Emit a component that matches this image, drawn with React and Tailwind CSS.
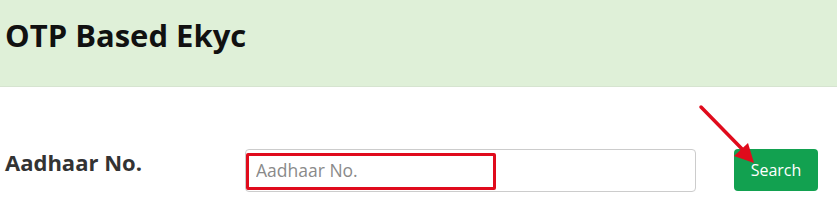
export default function App() {
  return (
    <div className="relative h-[202px] w-[837px] overflow-hidden bg-white font-['Open_Sans',sans-serif]">
      <header className="flex h-[87px] items-start border-b border-[#d6e4d0] bg-[#dff0d8] px-[5px] pt-[15px]">
        <h1 className="text-[31px] font-bold leading-[40px] text-[#111]">OTP Based Ekyc</h1>
      </header>

      <div className="flex items-center pl-[5px] pt-[61px]">
        <label className="w-[240px] pb-[16px] text-[22px] font-bold leading-[28px] text-[#333]">Aadhaar No.</label>
        <div className="relative h-[43px] w-[451px] rounded-[4px] border border-[#ccc] bg-white">
          <input
            type="text"
            placeholder="Aadhaar No."
            className="h-full w-full bg-transparent px-[10px] text-[17.5px] text-[#555] placeholder:text-[#8a8a8a] outline-none"
          />
          <div className="pointer-events-none absolute left-0 top-[3px] h-[37px] w-[250px] rounded-[2px] border-[3px] border-[#e00b1c]" />
        </div>
        <button className="ml-[38px] h-[42px] w-[84px] rounded-[4px] bg-[#12a150] text-[16px] text-white">
          Search
        </button>
      </div>

      <svg className="pointer-events-none absolute left-0 top-0" width="837" height="202">
        <line x1="701" y1="107" x2="745" y2="152" stroke="#e00b1c" strokeWidth="3.5" strokeLinecap="round" />
        <polygon points="754,163 734,156 748,143" fill="#e00b1c" />
      </svg>
    </div>
  );
}
